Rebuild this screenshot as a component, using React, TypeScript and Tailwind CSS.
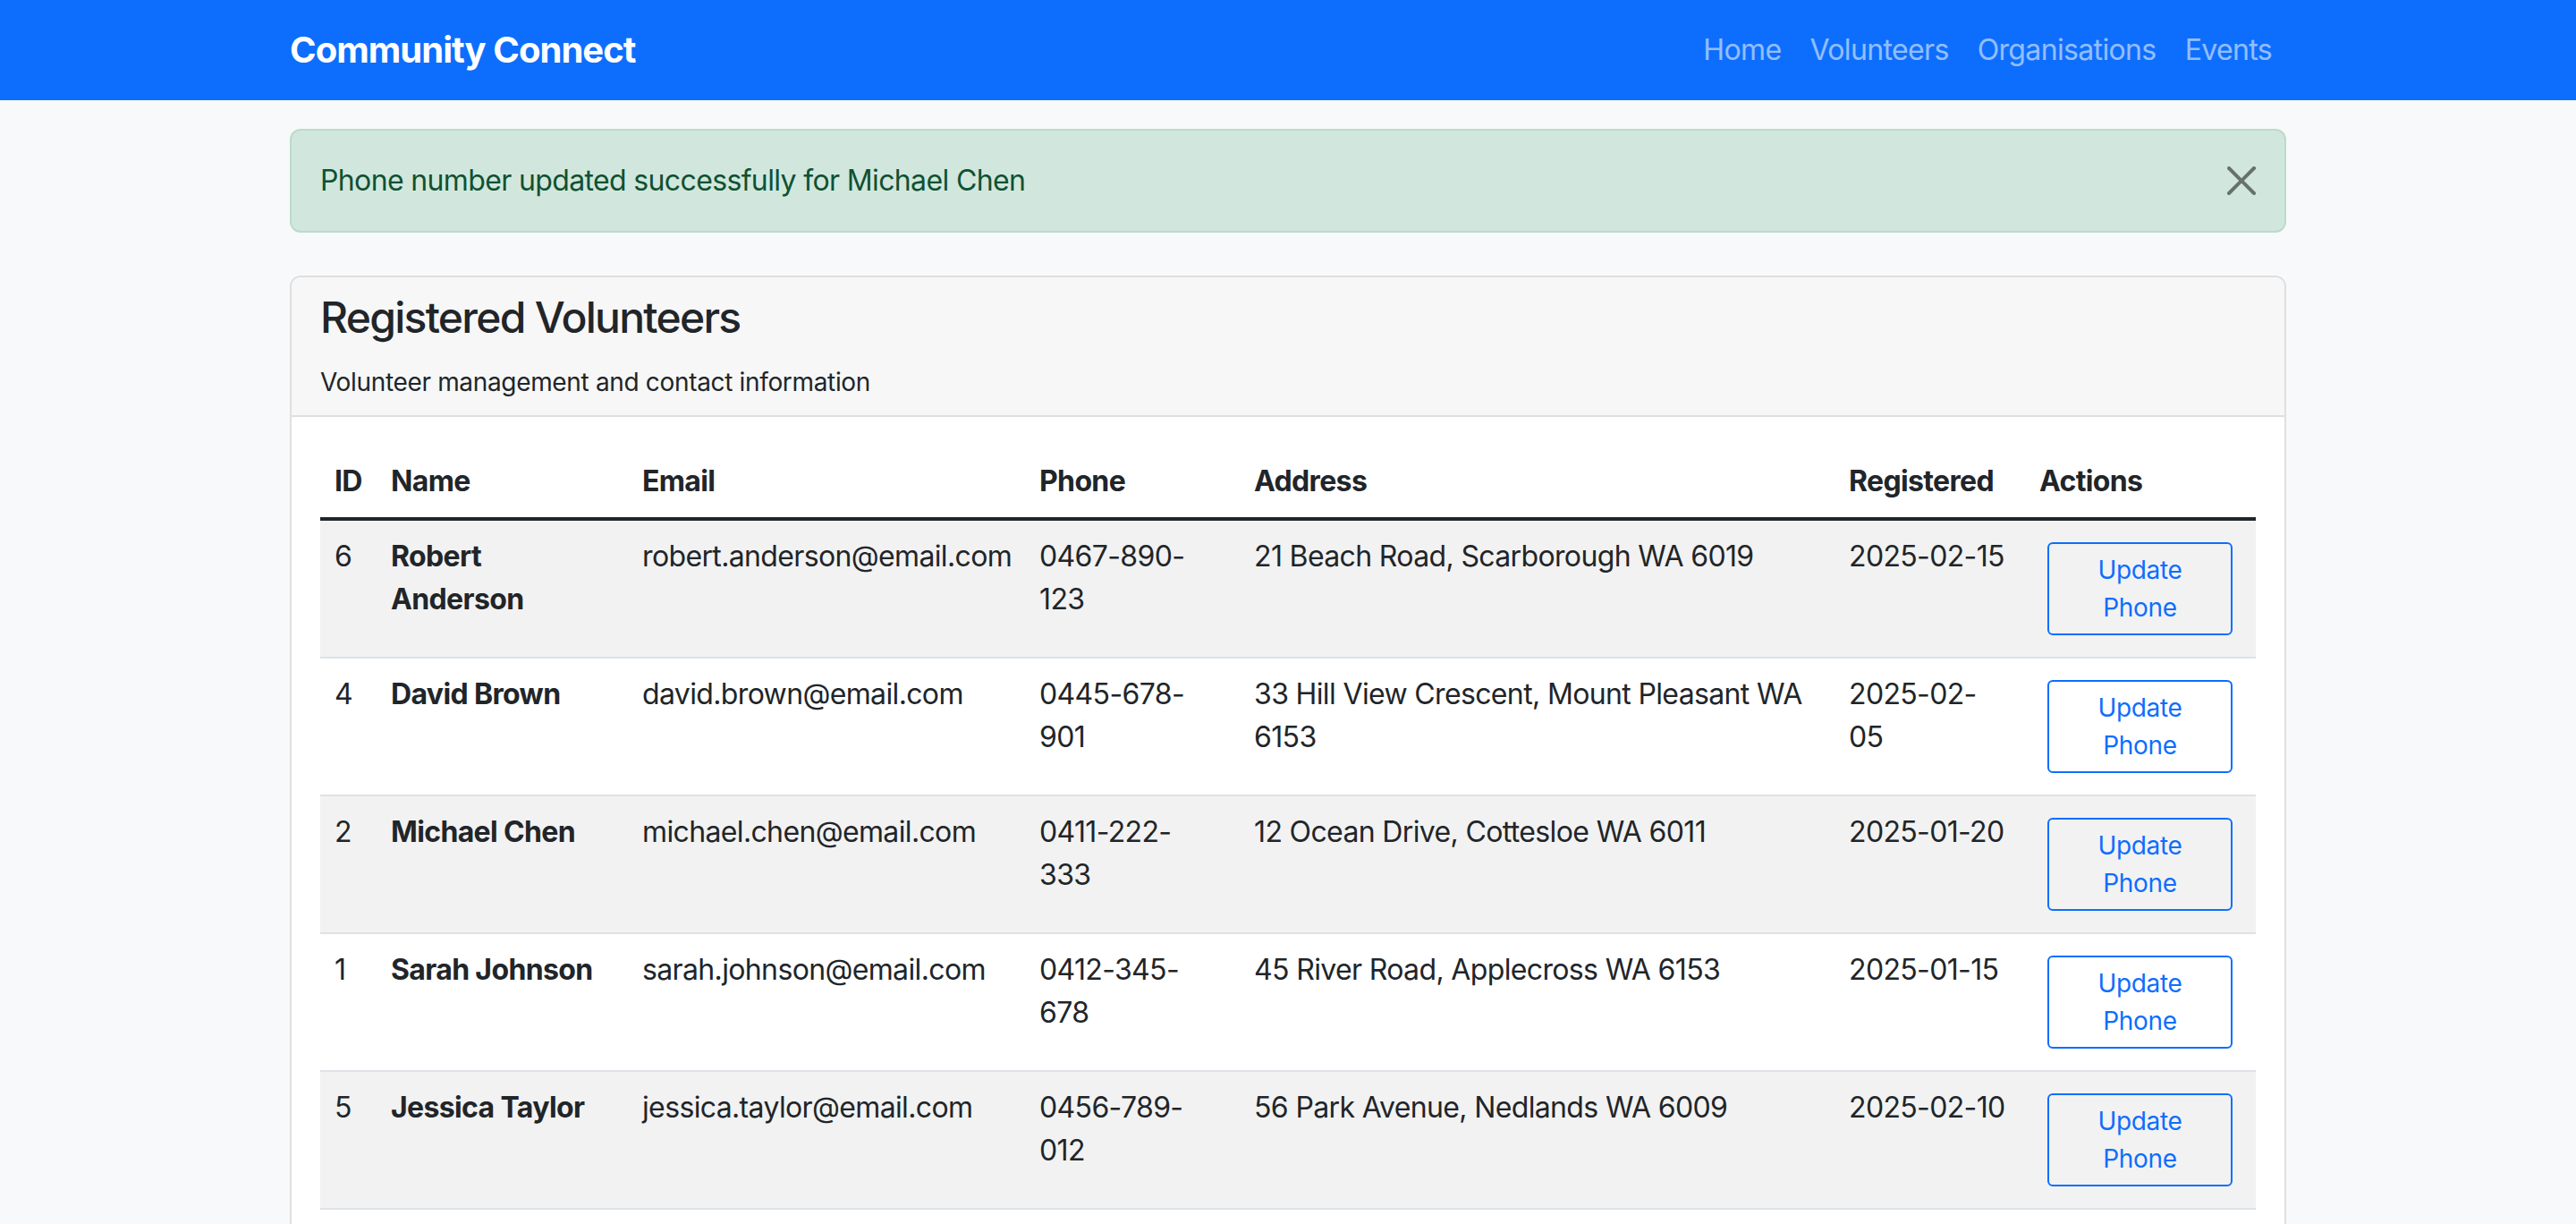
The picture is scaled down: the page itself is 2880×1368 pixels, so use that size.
import React from "react";

type Volunteer = {
  id: number;
  name: string;
  email: string;
  phone: string;
  address: string;
  registered: string;
};

const volunteers: Volunteer[] = [
  { id: 6, name: "Robert Anderson", email: "robert.anderson@email.com", phone: "0467-890-123", address: "21 Beach Road, Scarborough WA 6019", registered: "2025-02-15" },
  { id: 4, name: "David Brown", email: "david.brown@email.com", phone: "0445-678-901", address: "33 Hill View Crescent, Mount Pleasant WA 6153", registered: "2025-02-05" },
  { id: 2, name: "Michael Chen", email: "michael.chen@email.com", phone: "0411-222-333", address: "12 Ocean Drive, Cottesloe WA 6011", registered: "2025-01-20" },
  { id: 1, name: "Sarah Johnson", email: "sarah.johnson@email.com", phone: "0412-345-678", address: "45 River Road, Applecross WA 6153", registered: "2025-01-15" },
  { id: 5, name: "Jessica Taylor", email: "jessica.taylor@email.com", phone: "0456-789-012", address: "56 Park Avenue, Nedlands WA 6009", registered: "2025-02-10" },
];

const navLinks = ["Home", "Volunteers", "Organisations", "Events"];

function CloseIcon() {
  return (
    <svg viewBox="0 0 16 16" className="w-[32px] h-[32px]" fill="currentColor">
      <path d="M.293.293a1 1 0 0 1 1.414 0L8 6.586 14.293.293a1 1 0 1 1 1.414 1.414L9.414 8l6.293 6.293a1 1 0 0 1-1.414 1.414L8 9.414l-6.293 6.293a1 1 0 0 1-1.414-1.414L6.586 8 .293 1.707a1 1 0 0 1 0-1.414z" />
    </svg>
  );
}

export default function App() {
  return (
    <div className="min-h-screen bg-[#f8f9fa] font-['Inter',sans-serif] text-[32px] leading-[1.5] tracking-[-0.02em] text-[#212529]">
      <nav className="bg-[#0d6efd]">
        <div className="mx-auto flex h-[112px] w-[2280px] items-center justify-between px-[24px]">
          <a className="text-[40px] font-bold tracking-[-0.024em] text-white">Community Connect</a>
          <ul className="flex">
            {navLinks.map((link) => (
              <li key={link}>
                <a className="px-[16px] text-[32px] text-white/55">{link}</a>
              </li>
            ))}
          </ul>
        </div>
      </nav>

      <main className="mx-auto w-[2280px] px-[24px] pt-[32px]">
        {/* flash message */}
        <div className="mb-[48px] flex items-center justify-between rounded-[12px] border-2 border-[#badbcc] bg-[#d1e7dd] py-[32px] pl-[32px] pr-[32px] text-[#0f5132]">
          <span>Phone number updated successfully for Michael Chen</span>
          <button className="text-black opacity-50">
            <CloseIcon />
          </button>
        </div>

        <div className="overflow-hidden rounded-[12px] border-2 border-[#dfdfdf] bg-white">
          <div className="border-b-2 border-[#dfdfdf] bg-[#f7f7f7] px-[32px] py-[16px]">
            <h4 className="mb-[22px] text-[48px] font-medium leading-[1.2] tracking-[-0.036em]">Registered Volunteers</h4>
            <p className="text-[28px] leading-[1.5] tracking-[-0.012em]">Volunteer management and contact information</p>
          </div>

          <div className="p-[32px]">
            <table className="w-full table-fixed border-collapse text-left">
              <colgroup>
                <col className="w-[63px]" />
                <col className="w-[281px]" />
                <col className="w-[444px]" />
                <col className="w-[240px]" />
                <col className="w-[665px]" />
                <col className="w-[213px]" />
                <col className="w-[258px]" />
              </colgroup>
              <thead>
                <tr className="border-b-4 border-[#212529]">
                  {["ID", "Name", "Email", "Phone", "Address", "Registered", "Actions"].map((h) => (
                    <th key={h} className="p-[16px] font-bold">
                      {h}
                    </th>
                  ))}
                </tr>
              </thead>
              <tbody>
                {volunteers.map((v, i) => (
                  <tr key={v.id} className={`border-b-2 border-[#dee2e6] align-top ${i % 2 === 0 ? "bg-[#f2f2f2]" : "bg-white"}`}>
                    <td className="p-[16px]">{v.id}</td>
                    <td className="p-[16px] font-bold">{v.name}</td>
                    <td className="p-[16px]">{v.email}</td>
                    <td className="py-[16px] pl-[16px] pr-[40px]">{v.phone}</td>
                    <td className="p-[16px]">{v.address}</td>
                    <td className="p-[16px]">{v.registered}</td>
                    <td className="p-[16px]">
                      <button className="mx-[9px] my-[8px] block w-[207px] rounded-[6px] border-2 border-[#0d6efd] px-[16px] py-[8px] text-center text-[28px] leading-[1.5] tracking-[-0.012em] text-[#0d6efd]">
                        Update Phone
                      </button>
                    </td>
                  </tr>
                ))}
              </tbody>
            </table>
          </div>
        </div>
      </main>
    </div>
  );
}
